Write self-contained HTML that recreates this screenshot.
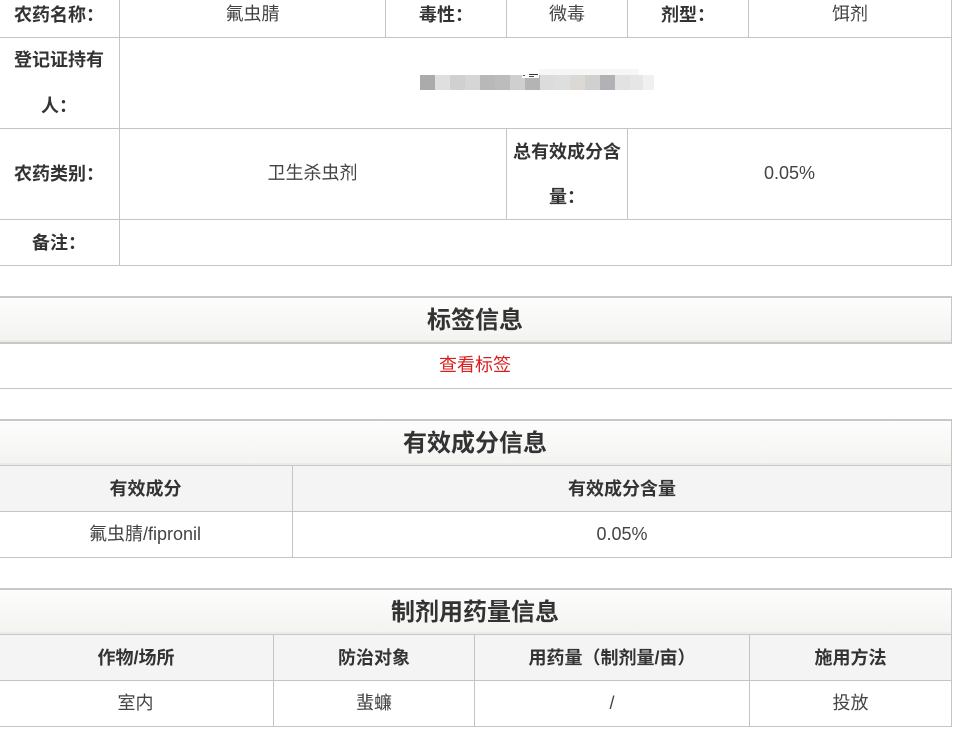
<!DOCTYPE html>
<html lang="zh">
<head>
<meta charset="utf-8">
<style>
html,body{margin:0;padding:0;background:#fff;width:960px;height:733px;overflow:hidden}
body{position:relative;font-family:"Liberation Sans","Noto Sans CJK SC",sans-serif;font-size:18px;color:#444}
.l{position:absolute;background:#c4c4c4}
.t{position:absolute;text-align:center;white-space:nowrap;line-height:46px;height:46px}
.b{font-weight:700;color:#333}
.bar{position:absolute;left:0;width:952px;background:linear-gradient(#fdfdfd,#f3f3f0);border-top:2px solid #c8c8c8;border-right:1px solid #c8c8c8;box-sizing:border-box;box-shadow:inset 0 -2px 0 #ebebe8}
.bar2{position:absolute;left:0;width:951px;background:#f4f4f4}
.h{position:absolute;left:0;width:950px;text-align:center;font-size:24px;font-weight:700;color:#333;line-height:46px}
.p{position:absolute;top:75px;height:15px;width:15px}
</style>
</head>
<body>
<!-- table 1 lines -->
<div class="l" style="left:0;top:37px;width:952px;height:1px"></div>
<div class="l" style="left:0;top:128px;width:952px;height:1px"></div>
<div class="l" style="left:0;top:219px;width:952px;height:1px"></div>
<div class="l" style="left:0;top:265px;width:952px;height:1px"></div>
<div class="l" style="left:119px;top:0;width:1px;height:266px"></div>
<div class="l" style="left:951px;top:0;width:1px;height:266px"></div>
<div class="l" style="left:385px;top:0;width:1px;height:38px"></div>
<div class="l" style="left:506px;top:0;width:1px;height:38px"></div>
<div class="l" style="left:627px;top:0;width:1px;height:38px"></div>
<div class="l" style="left:748px;top:0;width:1px;height:38px"></div>
<div class="l" style="left:506px;top:129px;width:1px;height:91px"></div>
<div class="l" style="left:627px;top:129px;width:1px;height:91px"></div>

<div class="t b" style="left:0;width:118px;top:-8px">农药名称：</div>
<div class="t" style="left:120px;width:265px;top:-9px">氟虫腈</div>
<div class="t b" style="left:386px;width:120px;top:-8px">毒性：</div>
<div class="t" style="left:507px;width:120px;top:-9px">微毒</div>
<div class="t b" style="left:628px;width:120px;top:-8px">剂型：</div>
<div class="t" style="left:749px;width:202px;top:-9px">饵剂</div>

<div class="t b" style="left:0;width:118px;top:37px">登记证持有</div>
<div class="t b" style="left:0;width:118px;top:83px">人：</div>

<div class="p" style="left:420px;background:#ababab"></div>
<div class="p" style="left:435px;background:#dedfde"></div>
<div class="p" style="left:450px;background:#d0d0d0"></div>
<div class="p" style="left:465px;background:#d6d6d6"></div>
<div class="p" style="left:480px;background:#b8b8b8"></div>
<div class="p" style="left:495px;background:#bcbcbc"></div>
<div class="p" style="left:510px;background:#cfcfcf"></div>
<div class="p" style="left:525px;background:#b4b4b4"></div>
<div class="p" style="left:540px;background:#dcdcdc"></div>
<div class="p" style="left:555px;background:#dedede"></div>
<div class="p" style="left:570px;background:#dcd8d4"></div>
<div class="p" style="left:585px;background:#cfd0cf"></div>
<div class="p" style="left:600px;background:#b2b2b6"></div>
<div class="p" style="left:615px;background:#e2e2e2"></div>
<div class="p" style="left:630px;background:#e6e6e6;width:13px"></div>
<div class="p" style="left:643px;background:#f0f0f0;width:11px"></div>
<div style="position:absolute;left:539px;top:69px;width:100px;height:6px;background:#f6f6f6"></div>
<div style="position:absolute;left:522px;top:72px;width:17px;height:6px;background:#fff"></div>
<div style="position:absolute;left:529px;top:74px;width:9px;height:1px;background:#333"></div>
<div style="position:absolute;left:523px;top:75px;width:2px;height:1px;background:#555"></div>
<div style="position:absolute;left:529px;top:76px;width:5px;height:1px;background:#444"></div>

<div class="t b" style="left:0;width:118px;top:151px">农药类别：</div>
<div class="t" style="left:120px;width:385px;top:150px">卫生杀虫剂</div>
<div class="t b" style="left:507px;width:120px;top:129px">总有效成分含</div>
<div class="t b" style="left:507px;width:120px;top:174px">量：</div>
<div class="t" style="left:628px;width:323px;top:150px">0.05%</div>
<div class="t b" style="left:0;width:118px;top:220px">备注：</div>

<!-- label section -->
<div class="bar" style="top:296px;height:48px;border-bottom:2px solid #c8c8c8"></div>
<div class="h" style="top:298px">标签信息</div>
<div class="t" style="left:0;width:950px;top:342px;color:#d81e1e">查看标签</div>
<div class="l" style="left:0;top:388px;width:952px;height:1px"></div>

<!-- active ingredient -->
<div class="bar" style="top:419px;height:47px;border-bottom:1px solid #c8c8c8"></div>
<div class="bar2" style="top:466px;height:46px"></div>
<div class="h" style="top:421px">有效成分信息</div>
<div class="l" style="left:0;top:511px;width:952px;height:1px"></div>
<div class="l" style="left:0;top:557px;width:952px;height:1px"></div>
<div class="l" style="left:292px;top:466px;width:1px;height:92px"></div>
<div class="l" style="left:951px;top:419px;width:1px;height:139px"></div>
<div class="t b" style="left:0;width:291px;top:466px">有效成分</div>
<div class="t b" style="left:293px;width:658px;top:466px">有效成分含量</div>
<div class="t" style="left:0;width:290px;top:511px">氟虫腈/fipronil</div>
<div class="t" style="left:293px;width:658px;top:511px">0.05%</div>

<!-- dosage -->
<div class="bar" style="top:588px;height:47px;border-bottom:1px solid #c8c8c8"></div>
<div class="bar2" style="top:635px;height:46px"></div>
<div class="h" style="top:590px">制剂用药量信息</div>
<div class="l" style="left:0;top:680px;width:952px;height:1px"></div>
<div class="l" style="left:0;top:726px;width:952px;height:1px"></div>
<div class="l" style="left:273px;top:635px;width:1px;height:92px"></div>
<div class="l" style="left:474px;top:635px;width:1px;height:92px"></div>
<div class="l" style="left:749px;top:635px;width:1px;height:92px"></div>
<div class="l" style="left:951px;top:588px;width:1px;height:139px"></div>
<div class="t b" style="left:0;width:272px;top:635px">作物/场所</div>
<div class="t b" style="left:274px;width:200px;top:635px">防治对象</div>
<div class="t b" style="left:475px;width:274px;top:635px">用药量（制剂量/亩）</div>
<div class="t b" style="left:750px;width:201px;top:635px">施用方法</div>
<div class="t" style="left:0;width:271px;top:680px">室内</div>
<div class="t" style="left:274px;width:200px;top:680px">蜚蠊</div>
<div class="t" style="left:475px;width:274px;top:680px">/</div>
<div class="t" style="left:750px;width:201px;top:680px">投放</div>
</body>
</html>
